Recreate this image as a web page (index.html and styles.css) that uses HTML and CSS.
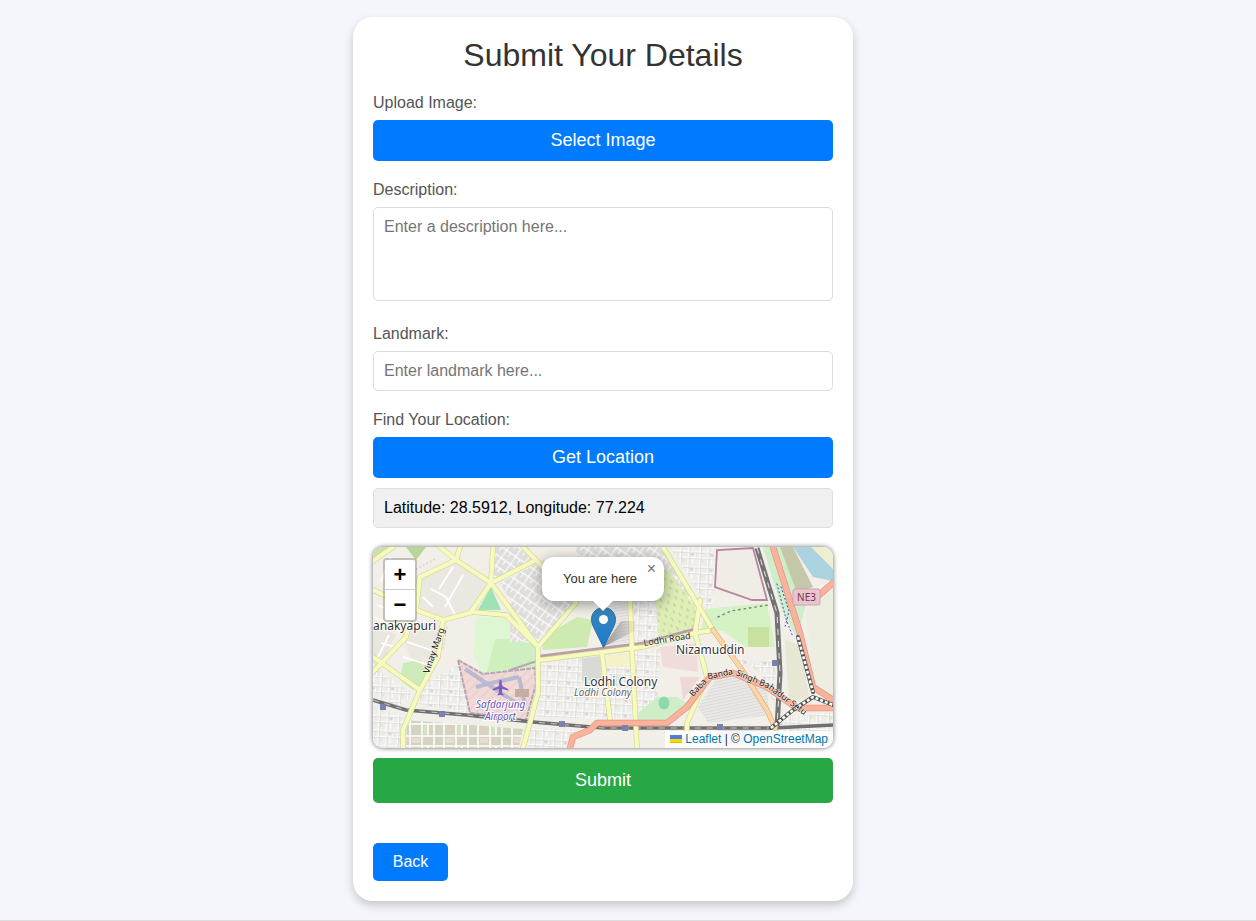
FILE: index.html
```html
<!DOCTYPE html>
<html lang="en">

<head>
  <meta charset="UTF-8" />
  <meta name="viewport" content="width=device-width, initial-scale=1.0" />
  <title>Submit Your Details</title>
  <link rel="stylesheet" href="styles.css">
</head>

<body>

  <div class="card">
    <h1>Submit Your Details</h1>

    <form class="details-form">
      <label>Upload Image:</label>
      <button type="button" class="btn btn-blue">Select Image</button>

      <label>Description:</label>
      <textarea placeholder="Enter a description here..."></textarea>

      <label>Landmark:</label>
      <input type="text" placeholder="Enter landmark here..." />

      <label>Find Your Location:</label>
      <button type="button" class="btn btn-blue">Get Location</button>
      <div class="coords">Latitude: 28.5912, Longitude: 77.224</div>

      <!-- Map -->
      <div class="map">
        <svg class="tiles" width="460" height="201" viewBox="0 0 460 201">
          <defs>
            <pattern id="blocks" width="13" height="11" patternUnits="userSpaceOnUse" patternTransform="rotate(35) scale(.85)">
              <rect width="13" height="11" fill="#e0dedc" />
              <path d="M0 1H13M1 0V11M7 1V6" stroke="#fff" stroke-width="1.200" />
            </pattern>
            <pattern id="dense" width="26" height="20" patternUnits="userSpaceOnUse" patternTransform="rotate(3) scale(.75)">
              <rect width="26" height="20" fill="#efedea" />
              <path d="M0 4H26M0 12H26M5 0V20M14 4V12M20 0V20M10 12V20" stroke="#fff" stroke-width="1.600" />
              <path d="M0 5.300H26M0 13.300H26M6.300 0V20M21.300 0V20M15.300 5V12" stroke="#cfcdcb" stroke-width=".7" />
              <rect x="8" y="6" width="4" height="3" fill="#d9d3cc" />
              <rect x="22" y="14" width="3" height="4" fill="#dfe8cf" />
            </pattern>
            <pattern id="stripes" width="6" height="3" patternUnits="userSpaceOnUse" patternTransform="rotate(-12)">
              <rect width="6" height="3" fill="#dcdbd9" />
              <path d="M0 1H6" stroke="#f6f6f6" stroke-width="1" />
            </pattern>
            <pattern id="olive" width="34" height="22" patternUnits="userSpaceOnUse">
              <rect width="34" height="22" fill="#d6d4c0" />
              <path d="M0 1H34M0 13H34M3 0V22M15 0V22M27 0V22M21 1V13" stroke="#fff" stroke-width="1.600" />
              <rect x="5" y="15" width="8" height="5" fill="#eadbd6" />
              <rect x="17" y="3" width="3" height="8" fill="#cfe6c0" />
            </pattern>
            <pattern id="hatch" width="7" height="7" patternUnits="userSpaceOnUse" patternTransform="rotate(-45)">
              <rect width="7" height="7" fill="#f0d9d7" />
              <path d="M0 1H7" stroke="#e8c9c6" stroke-width="1" />
            </pattern>
            <pattern id="scrub" width="11" height="9" patternUnits="userSpaceOnUse" patternTransform="rotate(60)">
              <rect width="11" height="9" fill="#dcefb7" />
              <path d="M1 2H5M7 6H10" stroke="#d2b88e" stroke-width="1" />
            </pattern>
          </defs>

          <rect width="460" height="201" fill="#f2efe9" />

          <!-- land use -->
          <path d="M0 0H20L0 16Z" fill="#cbe0a9" />
          <path d="M33 0H53L43 13Z" fill="#b8d59a" />
          <path d="M122 0H155L163 13 120 33Z" fill="url(#blocks)" />
          <path d="M127 36 163 96 203 56 170 13Z" fill="url(#blocks)" />
          <path d="M203 0H290L325 55 322 86 270 100 257 53 203 50Z" fill="url(#blocks)" />
          <path d="M83 13 118 36 100 63 70 72 47 62 47 30Z" fill="#ebe8e2" />
          <path d="M118 40 128 63 105 63Z" fill="#9fe3b5" />
          <path d="M103 70H133L162 106 163 120 110 127 100 107Z" fill="#def7d2" />
          <path d="M122 92H150L160 120 114 125Z" fill="#cdf0bd" />
          <path d="M27 83 65 73 63 106 48 140Z" fill="#ebe8df" />
          <path d="M0 80 23 87 7 123 0 117Z" fill="#e9e6dd" />
          <path d="M30 116 47 113 57 133 40 143 27 133Z" fill="#cdeabb" />
          <path d="M0 120 42 148 20 162 0 152Z" fill="url(#dense)" />
          <path d="M57 133 85 118 97 166 40 156Z" fill="url(#dense)" />
          <path d="M0 160 30 168 28 201 0 201Z" fill="url(#dense)" />
          <path d="M34 173 150 182 146 201 33 201Z" fill="url(#olive)" />
          <path d="M152 180 215 184 195 201 148 201Z" fill="url(#dense)" />
          <path d="M137 53 157 60 163 93 137 96Z" fill="url(#blocks)" />
          <path d="M137 96 165 96 164 121 137 122Z" fill="#cfeec2" />
          <path d="M170 90 204 70 220 73 214 100 170 103Z" fill="#cdebb0" />
          <path d="M235 53H254L257 95 232 100Z" fill="url(#stripes)" />
          <path d="M264 55H282L286 100H262Z" fill="url(#dense)" />
          <path d="M168 116 262 106 264 172 165 170Z" fill="url(#dense)" />
          <path d="M209 111 227 109 229 133 209 134Z" fill="#d9d9d6" />
          <path d="M232 110 258 106 260 118 234 120Z" fill="#f6f2c8" />
          <path d="M262 104 287 102 285 150 265 165Z" fill="url(#dense)" />
          <path d="M280 23 295 22 322 60 322 86 286 92Z" fill="url(#scrub)" />
          <path d="M287 100 324 96 325 125 290 120Z" fill="#f1dcdc" />
          <path d="M307 130 327 130 310 153Z" fill="#eed8d6" />
          <path d="M265 166 284 150 304 150 314 156 297 173 265 175Z" fill="#cfeec8" />
          <ellipse cx="291" cy="156" rx="5.500" ry="6.500" fill="#8fd8b0" />
          <path d="M297 0H340L342 40 338 66Z" fill="url(#dense)" />
          <path d="M344 3 342 40 379 53 394 53 380 1Z" fill="#f0ece6" stroke="#b585a1" stroke-width="1.800" />
          <path d="M332 62 394 56 402 100 372 100 350 84 328 84Z" fill="#d4f2c4" />
          <path d="M375 80H396V100H375Z" fill="#c8e0a0" />
          <path d="M344 88 367 118 402 112 402 160 390 130Z" fill="url(#dense)" />
          <path d="M347 126 394 140 396 168 335 176 325 160Z" fill="url(#stripes)" />
          <path d="M390 0H420L436 45 424 92 408 60Z" fill="#cdeec8" />
          <path d="M407 0H420L440 40 424 46Z" fill="#c5c8a8" />
          <path d="M420 0H440L460 22V34L440 30Z" fill="#aad3df" />
          <path d="M438 0H460V22Z" fill="#eeeed0" />
          <path d="M432 62 460 42V155L442 135Z" fill="#eeeee0" />
          <path d="M412 92 428 100 436 150 416 155Z" fill="#e7e7d4" />
          <path d="M404 172 460 165V201H392Z" fill="url(#dense)" />
          <path d="M345 182 396 182 392 201 340 201Z" fill="#e0dedb" />

          <!-- airport -->
          <path d="M85 113 110 127 162 121 163 137 153 173 97 166Z" fill="url(#hatch)" stroke="#b7a5b5" stroke-width="2" stroke-dasharray="5 1" />
          <path d="M92 122 146 158M103 140 118 136 146 130M146 130 152 158" fill="none" stroke="#b9b9d2" stroke-width="4" />
          <rect x="142" y="142" width="14" height="8" fill="#c7ad9f" />
          <path d="M127 133l1.400 0 .8 6 6 3v1.600l-6-1.500-.3 4 1.600 1.300v1.200l-3-.8-3 .8v-1.200l1.600-1.300-.3-4-6 1.500v-1.600l6-3 .8-6z" fill="#7b5dc4" />

          <!-- residential streets -->
          <g fill="none" stroke="#fff" stroke-width="1.800">
            <path d="M58 42 73 50 82 68M80 20 66 42M50 50 60 60M90 28 72 60" />
            <path d="M8 96 22 100M16 88 4 112M34 95 58 103M30 110 56 118" />
            <path d="M4 58 38 70M2 70 26 82M10 30 36 42M18 10 8 34" />
            <path d="M62 12 40 24M74 80 70 102" stroke="#dcd7d7" stroke-dasharray="2 2" />
            <path d="M171 108 230 101" stroke-width="1" />
          </g>

          <!-- railway -->
          <path d="M0 153 33 163 93 168 160 175 230 181 400 181 460 178" fill="none" stroke="#707070" stroke-width="3.600" />
          <path d="M0 153 33 163 93 168 160 175 230 181 400 181" fill="none" stroke="#ddd" stroke-width=".8" stroke-dasharray="6 6" />
          <path d="M384 1 404 66 407 126 404 181" fill="none" stroke="#737373" stroke-width="5" />
          <path d="M384 1 404 66 407 126 404 181" fill="none" stroke="#fff" stroke-width=".8" stroke-dasharray="6 6" />

          <!-- main roads -->
          <g fill="none" stroke-linejoin="round" stroke-linecap="round">
            <path d="M137 123 167 113" stroke="#b9a6b4" stroke-width="2" />
            <path d="M167 111 270 98 322 84" stroke="#b4a0a6" stroke-width="6.500" />
            <path class="yellow-edge" d="M120 0 118 36 165 100 165 146 150 201M67 0 83 13 118 36 98 65M163 13 118 36M150 0 163 13 203 56M87 0 83 13 47 30 33 90 0 125M47 30 43 63 70 73 100 65 133 68 165 100M0 43 43 63M70 73 65 110 47 143 30 183 30 201M0 110 47 143M0 14 20 0M165 100 203 56M167 113 270 100 322 86M229 106 237 173M259 103 264 201M259 103 257 53M290 0 340 83M322 86 327 53M322 86 334 130 314 176 314 201M340 83 322 86" />
            <path class="yellow-road" d="M120 0 118 36 165 100 165 146 150 201M67 0 83 13 118 36 98 65M163 13 118 36M150 0 163 13 203 56M87 0 83 13 47 30 33 90 0 125M47 30 43 63 70 73 100 65 133 68 165 100M0 43 43 63M70 73 65 110 47 143 30 183 30 201M0 110 47 143M0 14 20 0M165 100 203 56M167 113 270 100 322 86M229 106 237 173M259 103 264 201M259 103 257 53M290 0 340 83M322 86 327 53M322 86 334 130 314 176 314 201M340 83 322 86" />
            <path d="M340 83 367 120 394 163 402 181" stroke="#dca77f" stroke-width="5.400" />
            <path d="M340 83 367 120 394 163 402 181" stroke="#fcd6a4" stroke-width="4.200" />
            <path class="trunk-edge" d="M197 201 200 190 217 183 224 176H294L314 160 337 130 360 126 394 140 424 161H460" />
            <path class="trunk-edge" d="M400 0 427 86 440 140 460 153M444 50 460 36" />
            <path class="trunk-road" d="M197 201 200 190 217 183 224 176H294L314 160 337 130 360 126 394 140 424 161H460" />
            <path class="trunk-road" d="M400 0 427 86 440 140 460 153M444 50 460 36" />
            <path d="M425 90 440 145M398 181 420 163 440 150 460 158" stroke="#555" stroke-width="4" />
            <path d="M425 90 440 145M398 181 420 163 440 150 460 158" stroke="#fff" stroke-width="2.600" stroke-dasharray="3 2" stroke-linecap="butt" />
            <path d="M404 37 413 72 420 90M408 40 416 64 412 80" stroke="#2a3fe0" stroke-width="1" stroke-dasharray="1 3" />
            <path d="M345 70 358 64 395 58" stroke="#7f7f7f" stroke-width="1.400" stroke-dasharray="1.500 4" />
          </g>

          <!-- station markers -->
          <g fill="#7981b1">
            <rect x="7" y="157" width="6" height="6" />
            <rect x="66" y="164" width="6" height="6" />
            <rect x="186" y="174" width="6" height="6" />
            <rect x="249" y="178" width="6" height="6" />
            <rect x="344" y="177" width="6" height="6" />
            <rect x="399" y="113" width="6" height="6" />
          </g>

          <!-- map labels -->
          <path id="setu" d="M320 150 337 132 360 127 394 141 440 175" fill="none" />
          <g class="map-label">
            <text x="0" y="83" font-size="12">anakyapuri</text>
            <text x="211" y="138.500" font-size="12">Lodhi Colony</text>
            <text x="303" y="107" font-size="12">Nizamuddin</text>
            <text x="201" y="149" font-size="10" font-style="italic" fill="#666">Lodhi Colony</text>
            <text x="103" y="161" font-size="10" font-style="italic" fill="#6f52bb">Safdarjung</text>
            <text x="112" y="173" font-size="10" font-style="italic" fill="#6f52bb">Airport</text>
          </g>
          <g class="road-label">
            <text transform="translate(56 127) rotate(-71)">Vinay Marg</text>
            <text transform="translate(271 99) rotate(-9)">Lodhi Road</text>
            <text class="setu-label"><textPath href="#setu">Baba Banda Singh Bahadur Setu</textPath></text>
          </g>
          <rect x="420" y="42" width="27" height="16" rx="2" fill="#e8c6cf" stroke="#d3a0ae" />
          <text class="shield-text" x="433.500" y="54" text-anchor="middle">NE3</text>
        </svg>

        <div class="zoom-bar">
          <a class="zoom-in">+</a>
          <a class="zoom-out">&minus;</a>
        </div>

        <!-- marker -->
        <svg class="pin-shadow" width="41" height="41" viewBox="0 0 41 41">
          <defs>
            <linearGradient id="shadowFade" x1="0" x2="1">
              <stop offset="0" stop-color="#555" stop-opacity=".55" />
              <stop offset="1" stop-color="#555" stop-opacity="0" />
            </linearGradient>
          </defs>
          <path d="M0 40 18 14H32L36 22Z" fill="url(#shadowFade)" />
        </svg>
        <svg class="pin" width="25" height="41" viewBox="0 0 25 41">
          <defs>
            <linearGradient id="pinFill" x1="0" y1="0" x2="0" y2="1">
              <stop offset="0" stop-color="#3a86b8" />
              <stop offset="1" stop-color="#1e7bd0" />
            </linearGradient>
          </defs>
          <path d="M12.500 .5C5.800 .5 .5 5.800 .5 12.500 .5 15.500 1.500 18 3 21L12.500 40.500 22 21C23.500 18 24.500 15.500 24.500 12.500 24.500 5.800 19.200 .5 12.500 .5Z" fill="url(#pinFill)" stroke="#2a6ea6" stroke-width="1" />
          <circle cx="12.500" cy="12.500" r="4.500" fill="#fff" />
        </svg>

        <div class="popup">
          <div class="popup-content">You are here</div>
          <span class="popup-close">&times;</span>
          <div class="popup-tip"></div>
        </div>

        <div class="attribution">
          <svg width="12" height="8" viewBox="0 0 12 8"><rect width="12" height="4" fill="#4C7BE1" /><rect y="4" width="12" height="3" fill="#FFD500" /><rect y="7" width="12" height="1" fill="#E0BC00" /></svg>
          <a>Leaflet</a> | © <a>OpenStreetMap</a>
        </div>
      </div>

      <button type="button" class="btn btn-green">Submit</button>
    </form>

    <button type="button" class="btn-back">Back</button>
  </div>

</body>

</html>
```

FILE: styles.css
```css
body {
  font-family: "Liberation Sans", Arial, sans-serif;
  margin: 0;
  padding: 17px 50px 19px 0;
  background-color: #f4f6fb;
  border-bottom: 1px solid #dcdcdc;
}

.card {
  box-sizing: border-box;
  width: 500px;
  height: 884px;
  margin: 0 auto;
  padding: 20px;
  background: #fff;
  border-radius: 20px;
  box-shadow: 0 4px 10px rgba(0, 0, 0, 0.2);
}

h1 {
  margin: 0 0 19px;
  font-size: 32px;
  font-weight: 400;
  line-height: 37px;
  text-align: center;
  color: #333;
}

label {
  display: block;
  margin-bottom: 8px;
  padding-top: 1px;
  font-size: 16px;
  line-height: 18px;
  color: #555;
}

.btn {
  display: block;
  width: 100%;
  border: none;
  border-radius: 5px;
  color: #fff;
  font-family: inherit;
  font-size: 18px;
  cursor: pointer;
}

.btn-blue {
  height: 41px;
  margin-bottom: 19px;
  background-color: #007bff;
}

.btn-green {
  height: 45px;
  background-color: #28a745;
}

.btn-back {
  display: block;
  width: 75px;
  height: 38px;
  margin-top: 40px;
  border: none;
  border-radius: 5px;
  background-color: #007bff;
  color: #fff;
  font-family: inherit;
  font-size: 16px;
  cursor: pointer;
}

textarea,
input {
  display: block;
  box-sizing: border-box;
  width: 100%;
  padding: 10px;
  border: 1px solid #ddd;
  border-radius: 5px;
  font-family: inherit;
  font-size: 16px;
  resize: none;
}

textarea {
  height: 94px;
  margin-bottom: 23px;
}

input {
  height: 40px;
  margin-bottom: 19px;
}

.coords {
  box-sizing: border-box;
  height: 40px;
  margin-top: -9px;
  margin-bottom: 19px;
  padding: 10px;
  border: 1px solid #ddd;
  border-radius: 5px;
  background: #f0f0f0;
  font-size: 16px;
  line-height: 18px;
}

.map {
  position: relative;
  height: 201px;
  margin-bottom: 10px;
  overflow: hidden;
  border-radius: 10px;
  box-shadow: 0 0 5px rgba(0, 0, 0, 0.6);
  font-size: 12px;
}

.tiles {
  display: block;
}

.yellow-edge {
  stroke: #d3d393;
  stroke-width: 5.4px;
}

.yellow-road {
  stroke: #f7fabf;
  stroke-width: 4.2px;
}

.trunk-edge {
  stroke: #e2957f;
  stroke-width: 6.5px;
}

.trunk-road {
  stroke: #f9b29c;
  stroke-width: 5.2px;
}

.map-label {
  font-family: "Noto Sans", "Open Sans", sans-serif;
  fill: #333;
  stroke: #fff;
  stroke-width: 2px;
  paint-order: stroke;
}

.road-label {
  font-family: "Noto Sans", "Open Sans", sans-serif;
  font-size: 9px;
  fill: #222;
  stroke: rgba(255, 255, 255, 0.6);
  stroke-width: 1px;
  paint-order: stroke;
}

.setu-label {
  font-size: 8.6px;
}

.shield-text {
  font-family: "Noto Sans", sans-serif;
  font-size: 10px;
  fill: #7a3350;
}

.zoom-bar {
  position: absolute;
  top: 11px;
  left: 10px;
  border: 2px solid rgba(0, 0, 0, 0.2);
  border-radius: 4px;
  background-clip: padding-box;
}

.zoom-bar a {
  display: block;
  width: 30px;
  height: 30px;
  background: #fff;
  color: #000;
  font: bold 22px/30px "Liberation Sans", sans-serif;
  text-align: center;
}

.zoom-bar .zoom-in {
  height: 29px;
  border-bottom: 1px solid #ccc;
  border-radius: 2px 2px 0 0;
}

.zoom-out {
  border-radius: 0 0 2px 2px;
}

.pin,
.pin-shadow {
  position: absolute;
  top: 60px;
  left: 218px;
}

.pin-shadow {
  left: 230px;
}

.popup {
  position: absolute;
  top: 10px;
  left: 169px;
  width: 122px;
  height: 44px;
  border-radius: 12px;
  background: #fff;
  box-shadow: 0 3px 14px rgba(0, 0, 0, 0.4);
  color: #333;
}

.popup-content {
  position: relative;
  z-index: 1;
  padding: 13px 0 0 21px;
  font-size: 13px;
  line-height: 17px;
  color: #333;
}

.popup-close {
  position: absolute;
  top: 5px;
  right: 8px;
  z-index: 1;
  color: #757575;
  font-size: 16px;
  line-height: 14px;
}

.popup-tip {
  position: absolute;
  bottom: -7px;
  left: 54px;
  width: 14px;
  height: 14px;
  background: #fff;
  transform: rotate(45deg);
}

.attribution {
  position: absolute;
  right: 0;
  bottom: 0;
  padding: 0 5px;
  background: rgba(255, 255, 255, 0.8);
  color: #333;
  line-height: 16.8px;
}

.attribution a {
  color: #0078a8;
}
```
